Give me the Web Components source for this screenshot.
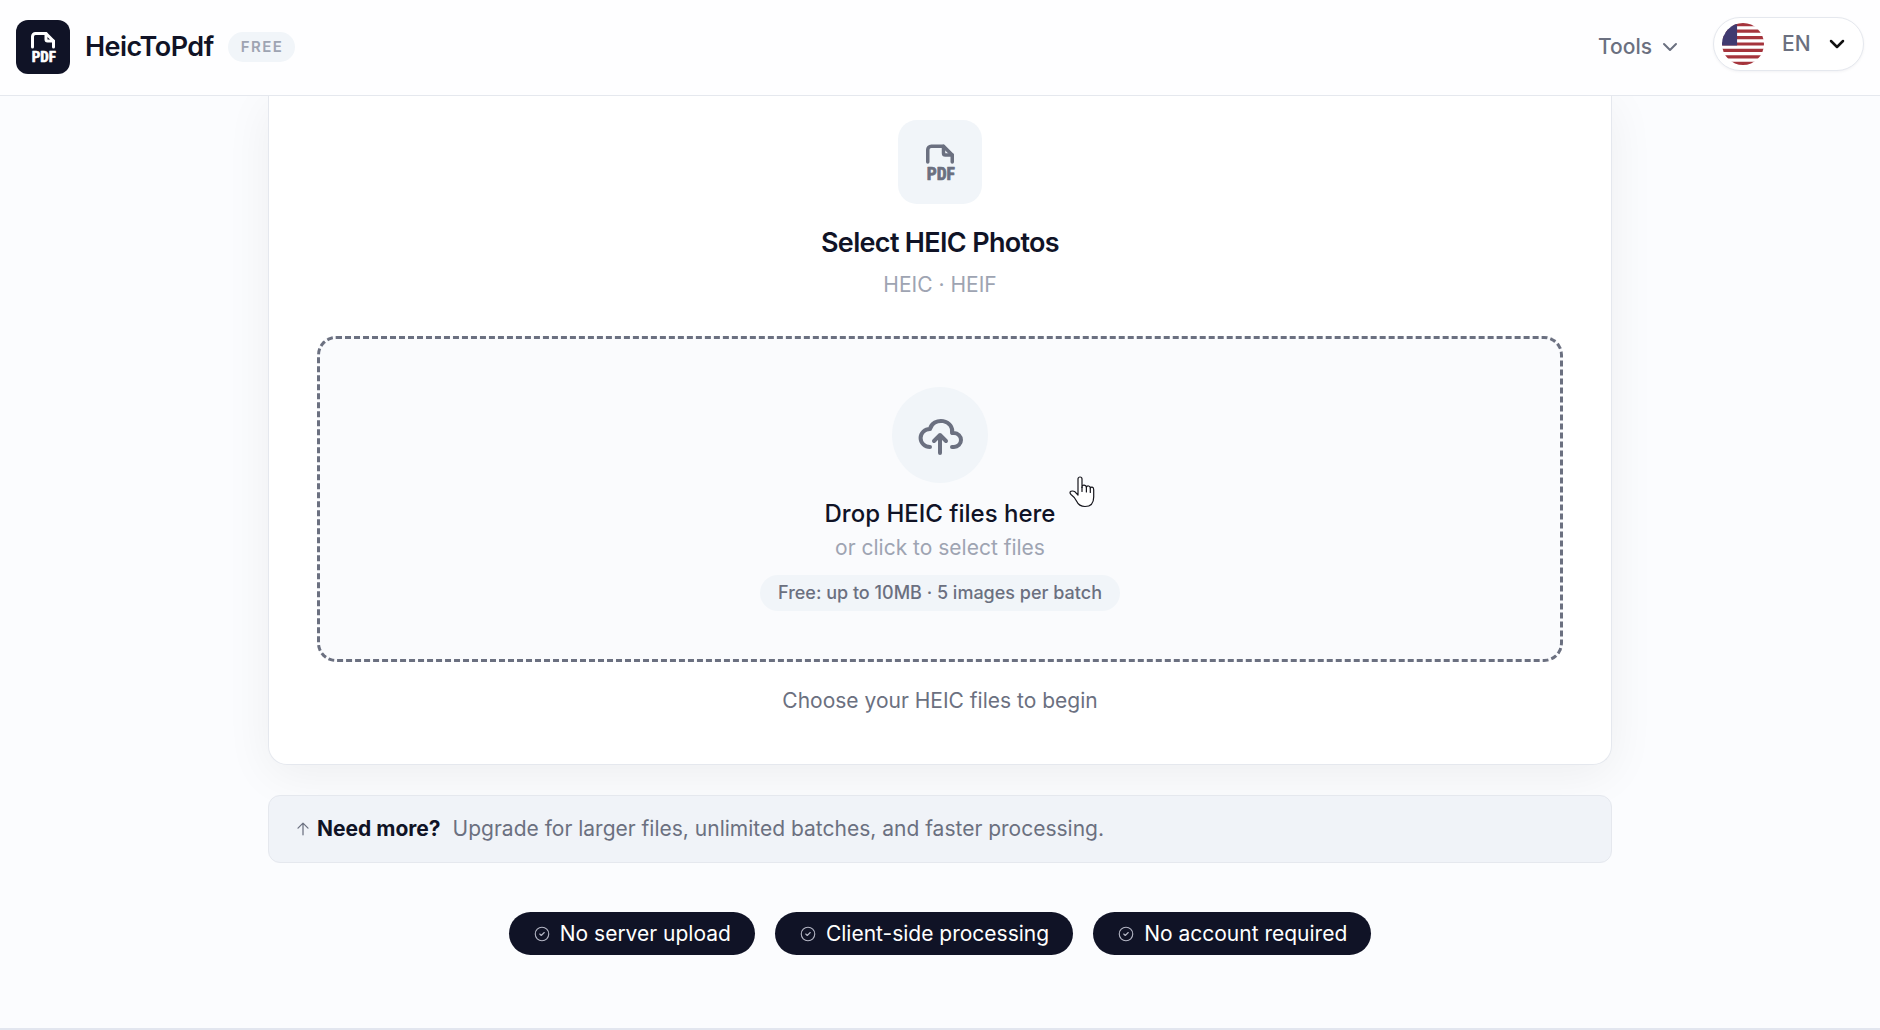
<!DOCTYPE html>
<html lang="en">
<head>
<meta charset="utf-8">
<meta name="viewport" content="width=device-width, initial-scale=1">
<title>HeicToPdf</title>
<style>
  :root {
    --ink: #101326;
    --muted: #6b7080;
    --faint: #9ea4b2;
    --tint: #f1f5f9;
    --line: #e5e8ee;
    --page: #fbfcfe;
  }
  body {
    margin: 0;
    min-height: 100vh;
    background: var(--page);
    color: var(--ink);
    font: 21px/32px Inter, "Liberation Sans", sans-serif;
  }
</style>
</head>
<body>
<heic-page>
  <heic-header slot="header" name="HeicToPdf" plan="FREE"></heic-header>
  <heic-card heading="Select HEIC Photos" formats="HEIC · HEIF">
    <heic-dropzone>
      <span slot="title">Drop HEIC files here</span>
      <span slot="hint">or click to select files</span>
      <span slot="limit">Free: up to 10MB · 5 images per batch</span>
    </heic-dropzone>
    <span slot="status">Choose your HEIC files to begin</span>
  </heic-card>
  <heic-upsell>
    <span slot="lead">Need more?</span>
    Upgrade for larger files, unlimited batches, and faster processing.
  </heic-upsell>
  <heic-badges>
    <heic-badge>No server upload</heic-badge>
    <heic-badge>Client-side processing</heic-badge>
    <heic-badge>No account required</heic-badge>
  </heic-badges>
</heic-page>

<script>
const ICONS = {
  pdf: `
    <path d="M14 3v4a1 1 0 0 0 1 1h4"/>
    <path d="M5 12V5a2 2 0 0 1 2-2h7l5 5v4"/>
    <text x="12.5" y="22" text-anchor="middle">PDF</text>`,
  cloud: `
    <path d="M7 18a4.6 4.4 0 0 1 0-9a5 4.5 0 0 1 11 2h1a3.5 3.5 0 0 1 0 7h-1"/>
    <path d="M9 15l3-3l3 3M12 12v9"/>`,
  chevron: '<path d="M6 9l6 6l6-6"/>',
  up: '<path d="M12 5v14M18 11l-6-6l-6 6"/>',
  check: '<circle cx="12" cy="12" r="9"/><path d="M9 12l2 2l4-4"/>',
};

class BaseElement extends HTMLElement {
  constructor() {
    super();
    const template = document.createElement('template');
    template.innerHTML = this.constructor.markup;
    this.attachShadow({ mode: 'open' }).appendChild(template.content.cloneNode(true));
  }
  connectedCallback() {
    this.shadowRoot.querySelectorAll('[data-attr]').forEach(el => {
      el.textContent = this.getAttribute(el.dataset.attr);
    });
  }
}

class HeicIcon extends BaseElement {
  static markup = `
    <style>
      :host { display: inline-flex; flex: none; width: 24px; height: 24px; }
      svg {
        width: 100%;
        height: 100%;
        fill: none;
        stroke: currentColor;
        stroke-width: var(--stroke, 2);
        stroke-linecap: round;
        stroke-linejoin: round;
      }
      text {
        fill: currentColor;
        stroke-width: 0.4;
        font: bold 10px "Roboto Condensed", "Noto Sans CJK JP", sans-serif;
      }
    </style>
    <svg viewBox="0 0 24 24" aria-hidden="true"></svg>
  `;
  connectedCallback() {
    this.shadowRoot.querySelector('svg').innerHTML = ICONS[this.getAttribute('name')];
  }
}

class HeicFlag extends BaseElement {
  static markup = `
    <style>
      :host { display: block; flex: none; width: 42px; height: 42px; }
      svg { display: block; width: 100%; height: 100%; border-radius: 50%; }
    </style>
    <svg viewBox="0 0 39 39" aria-hidden="true">
      <path fill="#fff" d="M0 0h39v39H0z"/>
      <path stroke="#a5343c" stroke-width="3" d="M0 1.5h39M0 7.5h39M0 13.5h39M0 19.5h39M0 25.5h39M0 31.5h39M0 37.5h39"/>
      <path fill="#403a70" d="M0 0h14v21H0z"/>
    </svg>
  `;
}

class HeicHeader extends BaseElement {
  static markup = `
    <style>
      :host { display: block; }
      header {
        display: flex;
        align-items: center;
        justify-content: space-between;
        box-sizing: border-box;
        height: 96px;
        padding: 0 16px 2px;
        background: #fefeff;
        border-bottom: 1px solid var(--line);
      }
      .brand, nav, .lang { display: flex; align-items: center; }
      .brand { color: inherit; text-decoration: none; }
      .logo {
        display: grid;
        place-items: center;
        width: 54px;
        height: 54px;
        margin-right: 15px;
        border-radius: 12px;
        background: var(--ink);
        color: #fff;
      }
      .logo heic-icon { width: 36px; height: 36px; }
      .name { font-size: 27px; font-weight: 600; letter-spacing: -0.02em; }
      .plan {
        margin-left: 14px;
        padding: 0 12px 0 13px;
        border-radius: 16px;
        background: var(--tint);
        color: var(--faint);
        font-size: 15px;
        line-height: 30px;
        font-weight: 600;
        letter-spacing: 0.1em;
      }
      nav { gap: 31px; padding-bottom: 6px; }
      button {
        display: flex;
        align-items: center;
        gap: 6px;
        padding: 6px 0 0;
        border: 0;
        background: none;
        color: var(--muted);
        font: inherit;
        font-weight: 500;
      }
      .lang {
        box-sizing: border-box;
        height: 54px;
        padding: 0 14px 0 8px;
        border: 1px solid var(--line);
        border-radius: 27px;
        background: #fff;
        box-shadow: 0 1px 3px rgb(15 23 42 / 5%);
      }
      select {
        appearance: none;
        margin-left: 18px;
        padding: 0;
        width: 43px;
        border: 0;
        background: none;
        color: var(--muted);
        font: inherit;
        font-weight: 500;
      }
      .lang heic-icon { color: #111; --stroke: 2.5; }
    </style>
    <header>
      <a class="brand" href="#">
        <span class="logo"><heic-icon name="pdf"></heic-icon></span>
        <span class="name" data-attr="name"></span>
        <span class="plan" data-attr="plan"></span>
      </a>
      <nav>
        <button type="button" aria-haspopup="true">Tools <heic-icon name="chevron"></heic-icon></button>
        <label class="lang">
          <heic-flag></heic-flag>
          <select aria-label="Language"><option>EN</option></select>
          <heic-icon name="chevron"></heic-icon>
        </label>
      </nav>
    </header>
  `;
}

class HeicCard extends BaseElement {
  static markup = `
    <style>
      :host {
        display: flex;
        flex-direction: column;
        align-items: center;
        padding: 24px 48px 47px;
        border: 1px solid var(--line);
        border-top: 0;
        border-radius: 0 0 19px 19px;
        background: #fff;
        box-shadow: 0 10px 48px rgb(0 0 0 / 6%);
      }
      .tile {
        display: grid;
        place-items: center;
        width: 84px;
        height: 84px;
        border-radius: 19px;
        background: var(--tint);
        color: var(--muted);
      }
      .tile heic-icon { width: 42px; height: 42px; }
      h2 {
        margin: 23px 0 10px;
        font-size: 27px;
        line-height: 32px;
        font-weight: 600;
        letter-spacing: -0.025em;
      }
      p { margin: 0; color: var(--muted); }
      .formats { color: var(--faint); margin-bottom: 35px; }
      ::slotted(heic-dropzone) { align-self: stretch; margin-bottom: 23px; }
    </style>
    <div class="tile"><heic-icon name="pdf"></heic-icon></div>
    <h2 data-attr="heading"></h2>
    <p class="formats" data-attr="formats"></p>
    <slot></slot>
    <p><slot name="status"></slot></p>
  `;
}

class HeicDropzone extends BaseElement {
  static markup = `
    <style>
      :host { display: block; position: relative; }
      label {
        display: flex;
        flex-direction: column;
        align-items: center;
        padding: 48px 24px;
        border: 3px dashed var(--muted);
        border-radius: 19px;
        background: #fafbfd;
      }
      input { position: absolute; opacity: 0; width: 1px; height: 1px; }
      .disc {
        display: grid;
        place-items: center;
        width: 96px;
        height: 96px;
        margin-bottom: 14px;
        border-radius: 50%;
        background: var(--tint);
        color: var(--muted);
      }
      .disc heic-icon { width: 48px; height: 48px; }
      .title { font-size: 24px; line-height: 34px; font-weight: 500; }
      .hint { color: var(--faint); line-height: 34px; }
      .limit {
        margin-top: 10px;
        padding: 0 18px;
        border-radius: 18px;
        background: var(--tint);
        color: var(--muted);
        font-size: 18px;
        line-height: 36px;
        font-weight: 500;
      }
      /* pointer resting over the drop area */
      .pointer {
        position: absolute;
        top: 139px;
        left: calc(50% + 128px);
        width: 28px;
        height: 34px;
        pointer-events: none;
      }
    </style>
    <label>
      <input type="file" accept=".heic,.heif" multiple>
      <span class="disc"><heic-icon name="cloud"></heic-icon></span>
      <span class="title"><slot name="title"></slot></span>
      <span class="hint"><slot name="hint"></slot></span>
      <span class="limit"><slot name="limit"></slot></span>
    </label>
    <svg class="pointer" viewBox="0 0 28 34" fill="#fff" stroke="#15151c" stroke-width="1.2" stroke-linecap="round" stroke-linejoin="round" aria-hidden="true">
      <path d="M10 20V4a2 2 0 0 1 4 0v8.500q0-2.500 2.200-2.300q2 .2 2.200 2q.5-1.500 2.200-1.200q1.600.3 1.700 2q.5-1 1.900-.8q1.500.4 1.500 2.500V22q0 9.500-8.700 9.500q-6 0-8.500-5.500q-2-4-5.500-6.500q-2-2 0-3.200q2-.8 4 .5z"/>
      <path fill="none" d="M14 12v4.500M18.400 12v5M22.300 13v4.500"/>
    </svg>
  `;
}

class HeicUpsell extends BaseElement {
  static markup = `
    <style>
      :host {
        display: flex;
        align-items: center;
        margin-top: 30px;
        padding: 17px 24px;
        border: 1px solid var(--line);
        border-radius: 12px;
        background: #f0f3f8;
        color: var(--muted);
      }
      heic-icon { width: 20px; height: 20px; margin-right: 4px; --stroke: 1.5; }
      strong { margin-right: 12px; font-weight: 700; color: var(--ink); }
    </style>
    <heic-icon name="up"></heic-icon>
    <strong><slot name="lead"></slot></strong>
    <span><slot></slot></span>
  `;
}

class HeicBadge extends BaseElement {
  static markup = `
    <style>
      :host {
        display: flex;
        align-items: center;
        gap: 9px;
        padding: 0 24px;
        border-radius: 22px;
        background: var(--ink);
        color: #fff;
        line-height: 43px;
      }
      heic-icon { width: 18px; height: 18px; color: #b4b6c4; --stroke: 1.5; }
    </style>
    <heic-icon name="check"></heic-icon>
    <span><slot></slot></span>
  `;
}

class HeicBadges extends BaseElement {
  static markup = `
    <style>
      :host {
        display: flex;
        flex-wrap: wrap;
        justify-content: center;
        gap: 20px;
        margin-top: 49px;
      }
    </style>
    <slot></slot>
  `;
}

class HeicPage extends BaseElement {
  static markup = `
    <style>
      :host { display: flex; flex-direction: column; min-height: 100vh; }
      ::slotted([slot="header"]) { position: sticky; top: 0; z-index: 1; }
      main {
        flex: 1;
        box-sizing: border-box;
        width: 100%;
        max-width: 1392px;
        margin: 0 auto;
        padding: 0 24px 48px;
      }
      footer { border-top: 2px solid #e2e6ef; }
    </style>
    <slot name="header"></slot>
    <main><slot></slot></main>
    <footer></footer>
  `;
}

customElements.define('heic-icon', HeicIcon);
customElements.define('heic-flag', HeicFlag);
customElements.define('heic-header', HeicHeader);
customElements.define('heic-card', HeicCard);
customElements.define('heic-dropzone', HeicDropzone);
customElements.define('heic-upsell', HeicUpsell);
customElements.define('heic-badge', HeicBadge);
customElements.define('heic-badges', HeicBadges);
customElements.define('heic-page', HeicPage);
</script>
</body>
</html>
